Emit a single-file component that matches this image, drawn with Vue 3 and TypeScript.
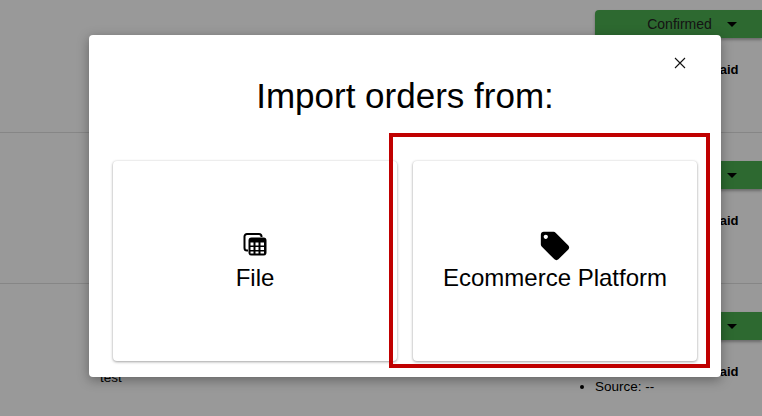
<script setup lang="ts">
interface OrderRow {
	id: number
	note: string
	source: boolean
}

const rows: OrderRow[] = [
	{ id: 1, note: '', source: false },
	{ id: 2, note: '', source: false },
	{ id: 3, note: 'test', source: true },
]
</script>

<template>
	<div class="page">
		<div v-for="row in rows" :key="row.id" class="order">
			<div class="note">{{ row.note }}</div>
			<div class="side">
				<button class="status">
					<span>Confirmed</span>
					<i class="caret" />
				</button>
				<div class="paid">Paid</div>
				<ul v-if="row.source" class="meta">
					<li>Source: --</li>
				</ul>
			</div>
		</div>

		<div class="overlay">
			<div class="dialog">
				<button class="close" aria-label="Close">
					<svg width="12" height="12" viewBox="0 0 12 12">
						<path d="M1 1l10 10M11 1L1 11" stroke="#111" stroke-width="1.1" fill="none" />
					</svg>
				</button>
				<h2 class="title">Import orders from:</h2>
				<div class="cards">
					<div class="card">
						<div class="icon">
							<svg class="file-icon" width="26" height="26" viewBox="0 0 26 26">
								<path
									d="M6 19.500H5A2.500 2.500 0 0 1 2.500 17V5.500A2.500 2.500 0 0 1 5 3h12a2.500 2.500 0 0 1 2.500 2.500V6"
									fill="none"
									stroke="#000"
									stroke-width="2"
								/>
								<path
									fill-rule="evenodd"
									d="M9.500 6.500h12a3 3 0 0 1 3 3v12a3 3 0 0 1-3 3h-12a3 3 0 0 1-3-3v-12a3 3 0 0 1 3-3zM8.500 11.500v3h3v-3zM13.500 11.500v3h3v-3zM18.500 11.500v3h3.500v-3zM8.500 16v3h3v-3zM13.500 16v3h3v-3zM18.500 16v3h3.500v-3zM8.500 20.500v2h3v-2zM13.500 20.500v2h3v-2zM18.500 20.500v2h3.500v-2z"
								/>
							</svg>
						</div>
						<span>File</span>
					</div>
					<div class="card">
						<div class="icon">
							<svg class="tag-icon" width="34" height="34" viewBox="0 0 24 24">
								<path
									d="M21.41 11.58l-9-9C12.05 2.22 11.55 2 11 2H4c-1.100 0-2 .9-2 2v7c0 .55.22 1.050.59 1.420l9 9c.36.36.86.58 1.410.58.55 0 1.050-.22 1.410-.59l7-7c.37-.36.59-.86.59-1.410 0-.55-.23-1.060-.59-1.420zM5.500 7C4.670 7 4 6.330 4 5.500S4.670 4 5.500 4 7 4.670 7 5.500 6.330 7 5.500 7z"
								/>
							</svg>
						</div>
						<span>Ecommerce Platform</span>
					</div>
				</div>
				<div class="highlight" />
			</div>
		</div>
	</div>
</template>

<style>
html,
body {
	margin: 0;
	background: #fff;
}
</style>

<style scoped>
.page {
	position: relative;
	width: 762px;
	height: 416px;
	overflow: hidden;
	font-family: 'Liberation Sans', Arial, sans-serif;
	color: #000;
}

.order {
	display: flex;
	justify-content: space-between;
	box-sizing: border-box;
	height: 151px;
	padding-top: 28px;
	border-bottom: 1px solid #e0e0e0;
}

.order:first-child {
	height: 133px;
	padding-top: 10px;
}

.order:last-child {
	border-bottom: none;
}

.note {
	margin: 58px 0 0 100px;
	font-size: 13.5px;
}

.side {
	width: 167px;
}

.status {
	display: flex;
	align-items: center;
	justify-content: center;
	gap: 15px;
	width: 100%;
	height: 28px;
	padding: 0 0 0 27px;
	border: none;
	border-radius: 4px 0 0 4px;
	background: #4caf50;
	color: #222;
	font: 14px 'Liberation Sans', Arial, sans-serif;
	box-shadow: 0 2px 3px rgba(0, 0, 0, 0.3);
}

.caret {
	width: 0;
	height: 0;
	border-left: 5px solid transparent;
	border-right: 5px solid transparent;
	border-top: 5px solid #000;
}

.paid {
	margin-top: 24px;
	padding-left: 116px;
	font-size: 13px;
	font-weight: 700;
}

.meta {
	margin: 0;
	padding: 0;
	font-size: 13.5px;
}

.overlay {
	position: absolute;
	inset: 0;
	background: rgba(0, 0, 0, 0.4);
}

.dialog {
	position: absolute;
	left: 89px;
	top: 35px;
	box-sizing: border-box;
	width: 632px;
	height: 342px;
	padding: 0 24px;
	border-radius: 4px;
	background: #fff;
	box-shadow: 0 3px 12px rgba(0, 0, 0, 0.35);
}

.close {
	position: absolute;
	top: 22px;
	right: 35px;
	display: flex;
	padding: 0;
	border: none;
	background: none;
}

.title {
	margin: 0;
	padding: 39px 0 43px;
	font-size: 35px;
	line-height: 44px;
	font-weight: 400;
	text-align: center;
}

.cards {
	display: flex;
	gap: 16px;
}

.card {
	display: flex;
	flex: 1;
	flex-direction: column;
	align-items: center;
	justify-content: center;
	height: 200px;
	border-radius: 4px;
	background: #fff;
	font-size: 24px;
	box-shadow: 0 1px 3px rgba(0, 0, 0, 0.35), 0 0 2px rgba(0, 0, 0, 0.1);
}

.icon {
	display: flex;
	align-items: center;
	justify-content: center;
	height: 34px;
}

.file-icon {
	margin-bottom: 6px;
}

.tag-icon {
	margin-bottom: 2px;
}

.highlight {
	position: absolute;
	left: 300px;
	top: 98px;
	box-sizing: border-box;
	width: 321px;
	height: 235px;
	border: 4px solid #c00000;
}
</style>
